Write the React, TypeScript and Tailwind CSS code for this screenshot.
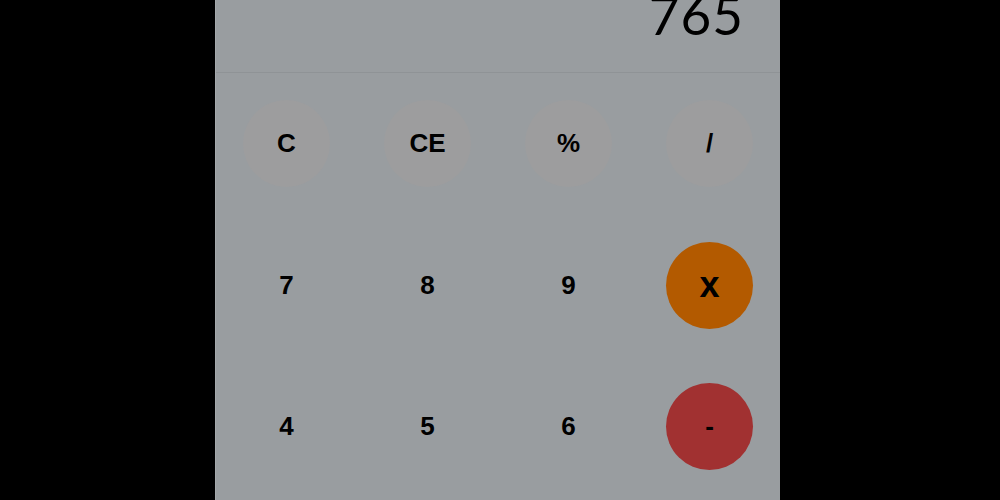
import React from 'react';

type Key = { label: string; tone: 'fn' | 'num' | 'mul' | 'sub' };

const keys: Key[] = [
  { label: 'C', tone: 'fn' },
  { label: 'CE', tone: 'fn' },
  { label: '%', tone: 'fn' },
  { label: '/', tone: 'fn' },
  { label: '7', tone: 'num' },
  { label: '8', tone: 'num' },
  { label: '9', tone: 'num' },
  { label: 'x', tone: 'mul' },
  { label: '4', tone: 'num' },
  { label: '5', tone: 'num' },
  { label: '6', tone: 'num' },
  { label: '-', tone: 'sub' },
  { label: '1', tone: 'num' },
  { label: '2', tone: 'num' },
  { label: '3', tone: 'num' },
  { label: '+', tone: 'fn' },
];

const toneClass: Record<Key['tone'], string> = {
  fn: 'bg-[#9d9d9e]',
  num: 'bg-transparent',
  mul: 'bg-[#b35a00] text-[36px]',
  sub: 'bg-[#a13131]',
};

export default function App() {
  return (
    <div className="min-h-screen bg-black overflow-hidden">
      <div className="ml-[215px] w-[565px] bg-[#999da0] border-l border-[#a4a8ab]">
        {/* Display */}
        <div className="h-[73px] border-b border-[#8f9396] flex justify-end items-start pr-[36px] overflow-hidden">
          <span className="font-['Lato',sans-serif] font-normal text-[53px] leading-[30px] text-black tracking-[1px]">
            765
          </span>
        </div>

        {/* Keypad */}
        <div className="grid grid-cols-4">
          {keys.map((k) => (
            <div key={k.label} className="h-[141.5px] flex items-center justify-center">
              <button
                className={
                  'w-[87px] h-[87px] rounded-full flex items-center justify-center font-["Liberation_Sans",Arial,sans-serif] font-bold text-[26px] text-black ' +
                  toneClass[k.tone]
                }
              >
                {k.label}
              </button>
            </div>
          ))}
        </div>
      </div>
    </div>
  );
}
